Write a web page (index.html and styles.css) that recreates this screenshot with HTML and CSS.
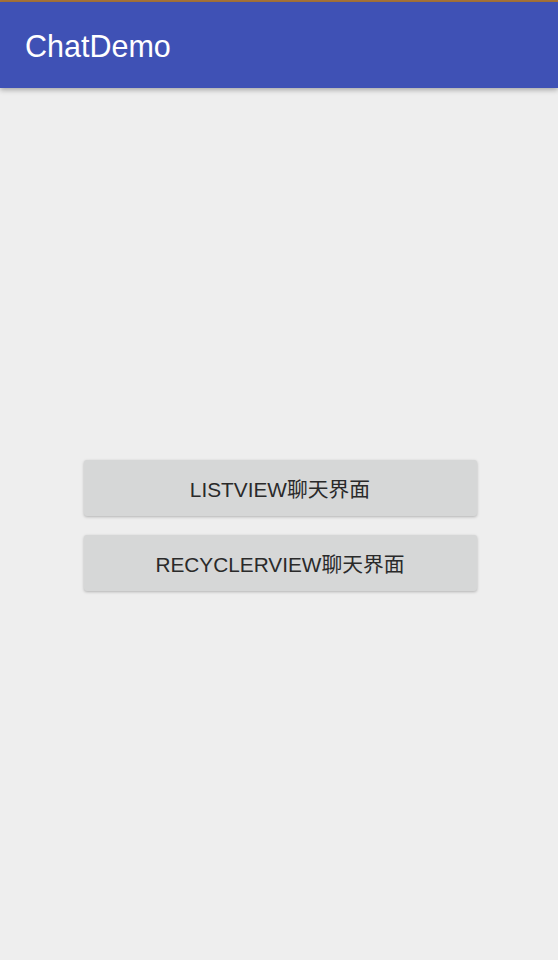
FILE: index.html
```html
<!DOCTYPE html>
<html>
<head>
<meta charset="utf-8">
<link rel="stylesheet" href="styles.css">
</head>
<body>
<div class="statusline"></div>
<header class="appbar"><span class="title">ChatDemo</span></header>
<main class="content">
  <div class="buttons">
    <button class="btn">LISTVIEW聊天界面</button>
    <button class="btn">RECYCLERVIEW聊天界面</button>
  </div>
</main>
</body>
</html>
```
FILE: styles.css
```css
html, body {
  margin: 0;
  padding: 0;
  height: 100%;
  background: #eeeeee;
  font-family: "Liberation Sans", "Noto Sans CJK SC", sans-serif;
}
body {
  display: flex;
  flex-direction: column;
}
.statusline {
  height: 2px;
  background: #a8743a;
}
.appbar {
  height: 86px;
  background: #3f51b5;
  display: flex;
  align-items: center;
  padding-left: 25px;
  box-shadow: 0 2px 5px rgba(0,0,0,0.3);
  position: relative;
  z-index: 1;
}
.title {
  color: #ffffff;
  font-size: 30.5px;
  font-weight: 400;
  margin-top: 2px;
}
.content {
  flex: 1;
  display: flex;
  justify-content: center;
  padding-top: 372px;
  padding-left: 2px;
}
.buttons {
  display: flex;
  flex-direction: column;
  gap: 19px;
  width: 393px;
}
.btn {
  height: 56px;
  border: none;
  border-radius: 3px;
  background: #d6d7d7;
  color: #2a2a2a;
  font-family: "Liberation Sans", "Noto Sans CJK SC", sans-serif;
  font-size: 20.8px;
  box-shadow: 0 1px 3px rgba(0,0,0,0.25);
  padding: 0;
}
```
